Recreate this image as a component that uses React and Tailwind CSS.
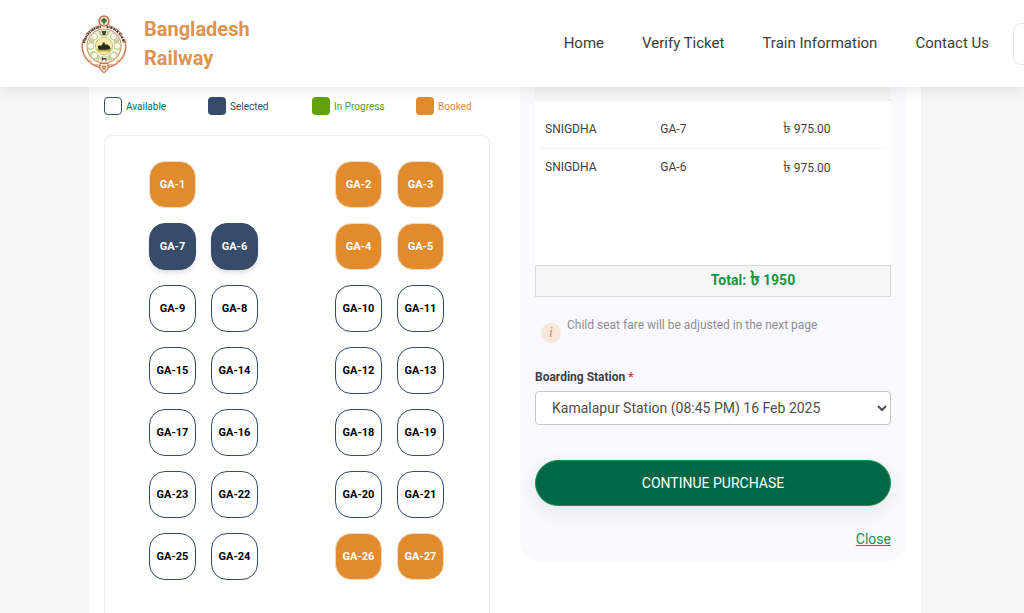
import React, { useState } from 'react';

const NAV_LINKS = ['Home', 'Verify Ticket', 'Train Information', 'Contact Us'];

const LEGEND = [
  { label: 'Available', box: 'border border-[#374b6b] bg-white', text: 'text-[#0a6b4b]' },
  { label: 'Selected', box: 'bg-[#374b6b]', text: 'text-[#374b6b]' },
  { label: 'In Progress', box: 'bg-[#61a10a]', text: 'text-[#5a9a12]' },
  { label: 'Booked', box: 'bg-[#e28b2d]', text: 'text-[#db8b3c]' },
];

// null = aisle or missing seat
const SEAT_ROWS = [
  [1, null, null, 2, 3],
  [7, 6, null, 4, 5],
  [9, 8, null, 10, 11],
  [15, 14, null, 12, 13],
  [17, 16, null, 18, 19],
  [23, 22, null, 20, 21],
  [25, 24, null, 26, 27],
];

const BOOKED = [1, 2, 3, 4, 5, 26, 27];
const FARE = 975;

const RailwayLogo = () => (
  <svg viewBox="0 -1 48 60" className="h-[60px] w-12 shrink-0" aria-hidden="true">
    <circle cx="24" cy="31" r="21" fill="#fffdfa" />
    <path d="M19.500 9.500C15 12.500 9 14 5.500 20M28.500 9.500C33 12.500 39 14 42.500 20" fill="none" stroke="#d58a66" strokeWidth="1" />
    <circle cx="24" cy="6" r="5" fill="#fbeee2" stroke="#c9704a" strokeWidth="1.6" />
    <path d="M24 2.600l3 2.400-.8 2.400h-1.400v2h-1.600v-2h-1.400L21 5z" fill="#3f7a3c" />
    <path d="M3.600 24A21.600 21.600 0 1 0 44.400 24" fill="none" stroke="#cc7a55" strokeWidth="1.500" />
    <path d="M4 28A20.300 20.300 0 0 1 21.500 11.600" fill="none" stroke="#54403a" strokeWidth="2.300" strokeDasharray="1.500 .6 .9 .4 2 .5" />
    <path d="M26.500 11.600A20.300 20.300 0 0 1 44 28" fill="none" stroke="#54403a" strokeWidth="2.300" strokeDasharray="1.800 .5 1 .6 2.200 1.100" />
    <circle cx="24" cy="31" r="17" fill="#faf7e4" stroke="#d3906a" strokeWidth="1.100" />
    <circle cx="24" cy="31" r="13.200" fill="none" stroke="#c5d093" strokeWidth="5.400" strokeDasharray="4 2.300" />
    <g fill="#fafaf0" stroke="#a9bd83" strokeWidth=".7">
      <circle cx="24" cy="17.800" r="3.300" />
      <circle cx="33.500" cy="21.500" r="3.200" />
      <circle cx="37.200" cy="31" r="3.200" />
      <circle cx="33.500" cy="40.500" r="3.200" />
      <circle cx="24" cy="44.200" r="3.300" />
      <circle cx="14.500" cy="40.500" r="3.200" />
      <circle cx="10.800" cy="31" r="3.200" />
      <circle cx="14.500" cy="21.500" r="3.200" />
    </g>
    <path d="M21.800 16h4.400l-.6 3.600L24 20.800l-1.600-1.200zM21.600 43.200l1-1.200.8 1h2.800l.4 2.600h-1l-.4-1.200h-1.800l-.4 1.200h-1z" fill="#45432f" />
    <circle cx="24" cy="31" r="8.600" fill="#f7eda9" stroke="#c4b163" strokeWidth=".8" />
    <path d="M16.600 33.400h14.800l-1.600 3.200H18.400z" fill="#a6ad48" />
    <path d="M17.600 31.400l1.600-1.200 1.800.6 1.400-1.400.4-2h1.800l.4 2h2.400l2.200 1.800 1 2.400-3 1.200H19z" fill="#2f2a20" />
    <path d="M9 43.500l3.400 3.500-2.400 2.500zM39 43.500L35.600 47l2.400 2.500z" fill="#e7b184" />
    <path d="M14.500 49.500l5.500 1M33.500 49.500l-5.500 1" stroke="#d58a66" strokeWidth="1.200" />
    <path d="M20 48.500h8v5.500l-4 3.800-4-3.800z" fill="#f6e7d6" stroke="#c8744e" strokeWidth="1.100" />
    <path d="M22 50.500h4v3l-2 2-2-2z" fill="#d9935f" />
  </svg>
);

const Seat = ({ number, selected, onToggle }) => {
  const booked = BOOKED.includes(number);
  let style = 'border-[#374b6b] bg-white text-black';
  if (booked) style = 'border-[#eed9c8] bg-[#e28b2d] text-white';
  else if (selected) style = 'border-[#374b6b] bg-[#374b6b] text-white shadow-md';

  return (
    <button
      type="button"
      disabled={booked}
      aria-pressed={selected}
      onClick={() => onToggle(number)}
      className={`h-[47px] w-[47px] rounded-2xl border pt-0.5 text-[11px] font-bold ${style}`}
    >
      GA-{number}
    </button>
  );
};

const Header = () => (
  <header className="sticky top-0 z-10 flex h-[87px] items-center bg-white pl-20 shadow-[0_2px_14px_rgba(0,0,0,0.1)]">
    <a href="#" className="flex items-center gap-4">
      <RailwayLogo />
      <span className="w-28 text-xl leading-[29px] font-bold text-[#dd934e]">Bangladesh Railway</span>
    </a>
    <nav className="ml-auto flex items-center gap-[38px] pr-6 text-[15px] text-[#3c3c3c]">
      {NAV_LINKS.map((link) => (
        <a key={link} href="#" className="whitespace-nowrap">{link}</a>
      ))}
    </nav>
    <button type="button" aria-label="Menu" className="h-[42px] w-[11px] rounded-l-lg border border-r-0 border-[#e8e8e8]" />
  </header>
);

export default function App() {
  const [selected, setSelected] = useState([7, 6]);

  const toggleSeat = (number) => {
    setSelected((prev) => (prev.includes(number) ? prev.filter((n) => n !== number) : [...prev, number]));
  };

  return (
    <div className="flex min-h-screen flex-col bg-[#f6f6f6] font-[Roboto,'Noto_Sans',sans-serif]">
      <Header />

      <div className="flex flex-1 pr-[103px] pl-[89px]">
        <main className="grid flex-1 grid-cols-2 gap-[30px] bg-white px-[15px]">
          <section className="flex flex-col pt-2.5">
            <ul className="flex h-[18px]">
              {LEGEND.map((item) => (
                <li key={item.label} className="flex w-[104px] items-center gap-1 last:w-auto">
                  <span className={`h-[18px] w-[18px] shrink-0 rounded ${item.box}`} />
                  <span className={`text-[10px] whitespace-nowrap ${item.text}`}>{item.label}</span>
                </li>
              ))}
            </ul>

            <div className="mt-5 flex-1 rounded-t-lg border border-b-0 border-[#ededf0] px-11 pt-[25px] pb-8">
              <div className="grid grid-cols-[repeat(5,47px)] gap-[15px]">
                {SEAT_ROWS.flat().map((number, i) =>
                  number ? (
                    <Seat key={number} number={number} selected={selected.includes(number)} onToggle={toggleSeat} />
                  ) : (
                    <span key={`gap-${i}`} />
                  )
                )}
              </div>
            </div>
          </section>

          <section className="self-start rounded-b-[20px] bg-[#faf9ff] px-[15px] pb-3">
            <div className="h-3.5 border-b border-[#ececec] bg-[#f5f5f5]" />
            <div className="h-[164px] overflow-y-auto bg-white px-[5px] pt-[9px]">
              <table className="w-full table-fixed text-left text-xs text-[#3f3f3f]">
                <tbody>
                  {selected.map((number) => (
                    <tr key={number} className="h-[38px] border-b border-[#f0f0f0] last:border-b-0">
                      <td className="w-1/3 pl-[5px]">SNIGDHA</td>
                      <td className="w-1/3 pl-[5px]">GA-{number}</td>
                      <td className="w-1/3 pl-3">
                        <span className="text-base leading-4">৳</span> {FARE.toFixed(2)}
                      </td>
                    </tr>
                  ))}
                </tbody>
              </table>
            </div>
            <div className="h-8 border border-[#d8d8de] bg-[#f6f6f6] pl-20 text-center text-sm leading-7 font-bold text-[#159447]">
              Total: <span className="text-xl leading-4">৳</span> {selected.length * FARE}
            </div>

            <div className="mt-5 flex h-[26px] gap-1.5 pl-1.5">
              <span className="flex h-5 w-5 items-center justify-center self-end rounded-full bg-[#f9e8da] font-['Liberation_Serif',serif] text-sm text-[#cc8f5c] italic">
                i
              </span>
              <p className="text-xs text-[#8d8d9b]">Child seat fare will be adjusted in the next page</p>
            </div>

            <label htmlFor="boarding" className="mt-[26px] block text-xs font-bold text-[#3f3f46]">
              Boarding Station <span className="text-[#e53945]">*</span>
            </label>
            <select
              id="boarding"
              className="mt-1.5 h-[34px] w-full rounded border border-[#c6c6cc] bg-white pl-3 text-sm text-[#4f4f4f]"
            >
              <option>Kamalapur Station (08:45 PM) 16 Feb 2025</option>
            </select>

            <button
              type="button"
              className="mt-[35px] block h-[46px] w-full rounded-full border border-[#159447] bg-[#006747] text-sm text-white shadow-[0_6px_18px_rgba(40,30,80,0.09)]"
            >
              CONTINUE PURCHASE
            </button>
            <div className="mt-[23px] text-right text-sm">
              <a href="#" className="text-[#159447] underline">Close</a>
            </div>
          </section>
        </main>
      </div>
    </div>
  );
}
